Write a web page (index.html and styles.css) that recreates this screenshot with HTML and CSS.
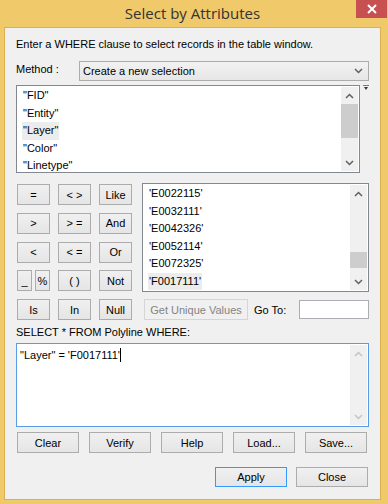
FILE: index.html
```html
<!DOCTYPE html>
<html lang="en">

<head>
  <meta charset="UTF-8">
  <title>Select by Attributes</title>
  <link rel="stylesheet" href="styles.css">
</head>

<body>
  <div class="window">
    <div class="titlebar">
      <span class="title">Select by Attributes</span>
      <span class="close">
        <svg width="12" height="10" viewBox="0 0 12 10"><path d="M2 1 L10 9 M10 1 L2 9" stroke="#fff" stroke-width="2" /></svg>
      </span>
    </div>
    <div class="client">
      <p class="intro">Enter a WHERE clause to select records in the table window.</p>
      <div class="method">
        <span class="method_label">Method :</span>
        <div class="combo">
          <span>Create a new selection</span>
          <svg width="9" height="6" viewBox="0 0 9 6"><path d="M1 1 L4.5 4.5 L8 1" stroke="#606060" stroke-width="1.5" fill="none" /></svg>
        </div>
      </div>
      <div class="fields_row">
        <div class="listbox fields">
          <ul>
            <li>"FID"</li>
            <li>"Entity"</li>
            <li class="sel">"Layer"</li>
            <li>"Color"</li>
            <li>"Linetype"</li>
          </ul>
          <div class="vscroll">
            <span class="arr">
              <svg width="9" height="6" viewBox="0 0 9 6"><path d="M1 5 L4.5 1.5 L8 5" stroke="#606060" stroke-width="1.5" fill="none" /></svg>
            </span>
            <span class="track"><span class="thumb thumb_top"></span></span>
            <span class="arr">
              <svg width="9" height="6" viewBox="0 0 9 6"><path d="M1 1 L4.5 4.5 L8 1" stroke="#606060" stroke-width="1.5" fill="none" /></svg>
            </span>
          </div>
        </div>
        <svg class="mini" width="6" height="6" viewBox="0 0 6 6"><path d="M0 0.5 H6" stroke="#777" /><path d="M1 2 H5 L3 5 Z" fill="#333" /></svg>
      </div>
      <div class="middle">
        <div class="ops">
          <button class="btn">=</button>
          <button class="btn">&lt; &gt;</button>
          <button class="btn">Like</button>
          <button class="btn">&gt;</button>
          <button class="btn">&gt; =</button>
          <button class="btn">And</button>
          <button class="btn">&lt;</button>
          <button class="btn">&lt; =</button>
          <button class="btn">Or</button>
          <div class="pair">
            <button class="btn">_</button>
            <button class="btn">%</button>
          </div>
          <button class="btn">( )</button>
          <button class="btn">Not</button>
        </div>
        <div class="listbox values">
          <ul>
            <li>'E0022115'</li>
            <li>'E0032111'</li>
            <li>'E0042326'</li>
            <li>'E0052114'</li>
            <li>'E0072325'</li>
            <li class="sel">'F0017111'</li>
          </ul>
          <div class="vscroll">
            <span class="arr">
              <svg width="9" height="6" viewBox="0 0 9 6"><path d="M1 5 L4.5 1.5 L8 5" stroke="#606060" stroke-width="1.5" fill="none" /></svg>
            </span>
            <span class="track"><span class="thumb thumb_low"></span></span>
            <span class="arr">
              <svg width="9" height="6" viewBox="0 0 9 6"><path d="M1 1 L4.5 4.5 L8 1" stroke="#606060" stroke-width="1.5" fill="none" /></svg>
            </span>
          </div>
        </div>
      </div>
      <div class="row_five">
        <div class="ops ops_last">
          <button class="btn">Is</button>
          <button class="btn">In</button>
          <button class="btn">Null</button>
        </div>
        <button class="btn btn_off">Get Unique Values</button>
        <span class="goto">Go To:</span>
        <span class="goto_box"></span>
      </div>
      <p class="select_label">SELECT * FROM Polyline WHERE:</p>
      <div class="sql">
        <div class="sql_text">"Layer" = 'F0017111'<span class="caret"></span></div>
        <div class="vscroll vscroll_off">
          <span class="arr">
            <svg width="9" height="6" viewBox="0 0 9 6"><path d="M1 5 L4.5 1.5 L8 5" stroke="#c4c4c4" stroke-width="1.5" fill="none" /></svg>
          </span>
          <span class="track"></span>
          <span class="arr">
            <svg width="9" height="6" viewBox="0 0 9 6"><path d="M1 1 L4.5 4.5 L8 1" stroke="#c4c4c4" stroke-width="1.5" fill="none" /></svg>
          </span>
        </div>
      </div>
      <div class="tools">
        <button class="btn">Clear</button>
        <button class="btn">Verify</button>
        <button class="btn">Help</button>
        <button class="btn">Load...</button>
        <button class="btn">Save...</button>
      </div>
      <div class="actions">
        <button class="btn btn_default">Apply</button>
        <button class="btn">Close</button>
      </div>
    </div>
  </div>
</body>

</html>
```

FILE: styles.css
```css
* {
  margin: 0;
  padding: 0;
  box-sizing: border-box;
}

body {
  width: 388px;
  height: 504px;
  font-family: "Liberation Sans", Arial, sans-serif;
  font-size: 11px;
  color: #000;
}

ul {
  list-style: none;
}

.window {
  width: 388px;
  height: 504px;
  background-color: #f0c96a;
  padding: 0 7px 4px 4px;
  display: flex;
  flex-direction: column;
}

.titlebar {
  position: relative;
  height: 27px;
  text-align: center;
}

.title {
  display: block;
  padding-top: 3px;
  font-family: "Open Sans", "Noto Sans", sans-serif;
  font-size: 15px;
  line-height: 20px;
  color: #333;
}

.close {
  position: absolute;
  top: 0;
  right: -6px;
  width: 31px;
  height: 18px;
  background-color: #c75050;
  display: flex;
  align-items: center;
  justify-content: center;
}

.client {
  flex: 1;
  background-color: #f0f0f0;
  border: 1px solid #d9b152;
  padding: 10px 11px 0 11px;
}

.intro {
  line-height: 13px;
}

.method {
  display: flex;
  align-items: center;
  margin-top: 10px;
  height: 20px;
}

.method_label {
  width: 63px;
  padding-bottom: 4px;
}

.combo {
  flex: 1;
  height: 20px;
  border: 1px solid #acacac;
  background: linear-gradient(#f2f2f2, #e6e6e6);
  display: flex;
  align-items: center;
  justify-content: space-between;
  padding: 0 5px 0 3px;
}

.fields_row {
  display: flex;
  margin-top: 4px;
}

.mini {
  margin: 0 0 0 3px;
}

.listbox {
  display: flex;
  background-color: #fff;
  border: 1px solid #828790;
}

.listbox ul {
  flex: 1;
  padding: 1px 0 0 5px;
}

.listbox li {
  height: 17.5px;
  line-height: 17px;
  width: max-content;
  padding: 0 1px;
}

.listbox li.sel {
  background-color: #ececec;
}

.fields {
  width: 345px;
  height: 88px;
}

.vscroll {
  width: 17px;
  display: flex;
  flex-direction: column;
  background-color: #f0f0f0;
  margin: 1px 1px 1px 0;
}

.arr {
  height: 17px;
  display: flex;
  align-items: center;
  justify-content: center;
}

.track {
  flex: 1;
  position: relative;
}

.thumb {
  position: absolute;
  left: 0;
  right: 0;
  background-color: #cdcdcd;
}

.thumb_top {
  top: 0;
  height: 34px;
}

.thumb_low {
  top: 50px;
  height: 16px;
}

.middle {
  display: flex;
  justify-content: space-between;
  margin-top: 10px;
}

.ops {
  display: grid;
  grid-template-columns: 33px 33px 33px;
  column-gap: 8px;
  row-gap: 7px;
  padding-top: 1px;
  width: 117px;
  margin-left: 1px;
}

.ops .btn {
  height: 21px;
}

.pair {
  display: flex;
  justify-content: space-between;
}

.pair .btn {
  width: 15px;
}

.values {
  width: 227px;
  height: 109px;
}

.values ul {
  padding-top: 1px;
}

.btn {
  font-family: "Liberation Sans", Arial, sans-serif;
  font-size: 11px;
  color: #000;
  background: linear-gradient(#f0f0f0, #e5e5e5);
  border: 1px solid #acacac;
  height: 21px;
}

.row_five {
  display: flex;
  align-items: center;
  margin-top: 7px;
}

.ops_last {
  padding-top: 0;
}

.btn_off {
  width: 104px;
  margin-left: 10px;
  color: #838383;
  border-color: #d5d5d5;
  background: #f0f0f0;
}

.goto {
  margin-left: 6px;
  width: 45px;
}

.goto_box {
  width: 70px;
  height: 19px;
  background-color: #fff;
  border: 1px solid #abadb3;
}

.select_label {
  margin-top: 6px;
  line-height: 13px;
}

.sql {
  display: flex;
  margin-top: 4px;
  height: 84px;
  background-color: #fff;
  border: 1px solid #569de5;
}

.sql_text {
  flex: 1;
  padding: 3px 0 0 3px;
  line-height: 16px;
}

.caret {
  display: inline-block;
  width: 1px;
  height: 14px;
  background-color: #000;
  vertical-align: -3px;
}

.vscroll_off {
  background-color: #f0f0f0;
}

.tools {
  display: grid;
  grid-template-columns: repeat(5, 62px);
  column-gap: 10px;
  margin: 5px 0 0 1px;
}

.actions {
  display: flex;
  justify-content: flex-end;
  gap: 9px;
  margin: 14px 1px 0 0;
}

.actions .btn {
  width: 72px;
  height: 20px;
}

.btn_default {
  border-color: #3399ff;
}
```
